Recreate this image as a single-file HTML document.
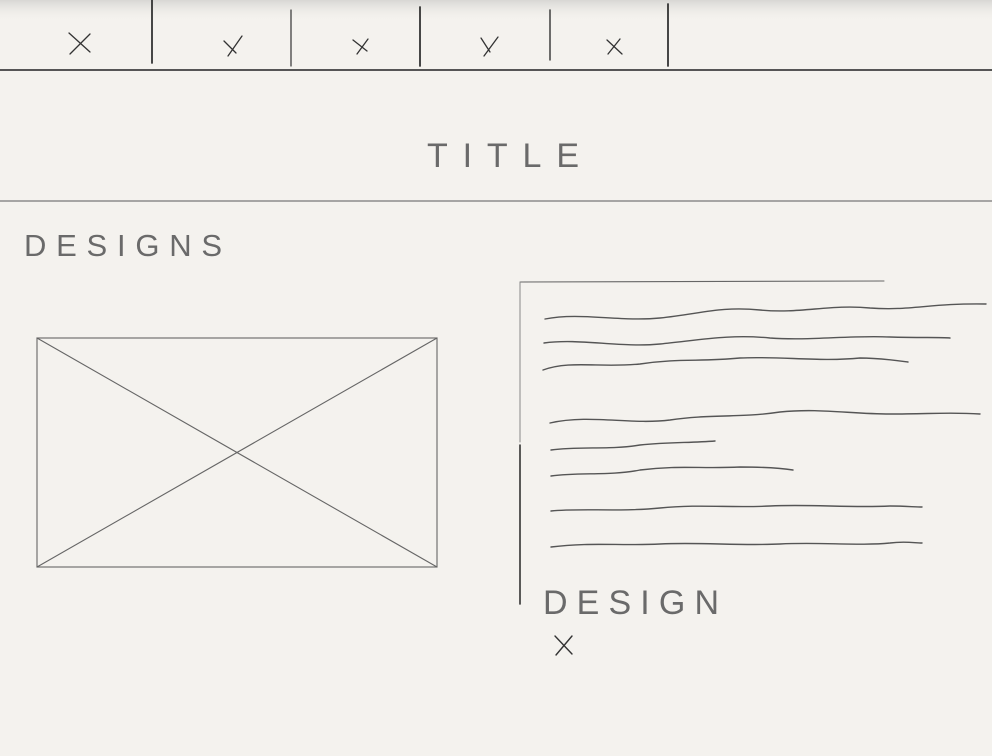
<!DOCTYPE html>
<html><head><meta charset="utf-8"><style>
html,body{margin:0;padding:0;background:#f4f2ee;}
svg{display:block}
text{font-family:"Liberation Sans",sans-serif;fill:#6a6a6a;font-weight:normal}
</style></head><body>
<svg width="992" height="756" viewBox="0 0 992 756" xmlns="http://www.w3.org/2000/svg">
<defs>
<linearGradient id="g" x1="0" y1="0" x2="0" y2="1">
<stop offset="0" stop-color="#d8d7d4"/><stop offset="1" stop-color="#f4f2ee" stop-opacity="0"/>
</linearGradient>
</defs>
<rect width="992" height="756" fill="#f4f2ee"/>
<rect width="992" height="22" fill="url(#g)"/>
<g stroke="#333" fill="none" stroke-linecap="round">
<line x1="152" y1="0" x2="152" y2="63" stroke-width="1.8"/>
<line x1="291" y1="10" x2="291" y2="66" stroke-width="1.2"/>
<line x1="420" y1="7" x2="420" y2="66" stroke-width="1.8"/>
<line x1="550" y1="10" x2="550" y2="60" stroke-width="1.4"/>
<line x1="668" y1="4" x2="668" y2="66" stroke-width="1.8"/>
<g stroke-width="1.3">
<path d="M69 33 L90 52 M90 34 L70 54"/>
<path d="M224 41 L236 53 M242 36 L228 56"/>
<path d="M353 40 L367 51 M368 39 L357 54"/>
<path d="M481 38 L490 52 M498 37 L484 56"/>
<path d="M607 40 L622 54 M620 39 L608 54"/>
</g>
<line x1="0" y1="70" x2="992" y2="70" stroke="#555" stroke-width="2"/>
<line x1="0" y1="201" x2="992" y2="201" stroke="#777" stroke-width="1.2"/>
<g stroke="#666" stroke-width="1.1">
<rect x="37" y="338" width="400" height="229"/>
<line x1="37" y1="338" x2="437" y2="567"/>
<line x1="437" y1="338" x2="37" y2="567"/>
</g>
<line x1="520" y1="282" x2="884" y2="281" stroke="#666" stroke-width="1.1"/>
<line x1="520" y1="282" x2="520" y2="442" stroke="#888" stroke-width="1"/>
<line x1="520" y1="445" x2="520" y2="604" stroke="#333" stroke-width="1.6"/>
<g stroke="#555" stroke-width="1.4">
<path d="M545 319 C580 312 620 322 660 318 C700 314 720 306 760 310 C800 314 830 304 870 308 C910 311 930 303 986 304"/>
<path d="M544 343 C580 338 620 348 660 344 C700 340 730 334 770 338 C810 341 850 335 890 337 C920 338 940 337 950 338"/>
<path d="M543 370 C570 360 600 368 640 364 C680 358 700 362 740 358 C780 356 820 362 860 358 C880 358 900 361 908 362"/>
<path d="M550 423 C590 414 630 425 670 420 C710 414 740 418 780 412 C820 408 850 414 890 414 C930 414 950 412 980 414"/>
<path d="M551 450 C580 446 610 450 640 445 C670 442 690 443 715 441"/>
<path d="M551 476 C580 472 610 476 640 470 C680 465 700 469 740 467 C760 467 780 468 793 470"/>
<path d="M551 511 C580 508 620 512 660 508 C700 504 730 508 770 506 C810 504 850 508 890 506 C905 506 915 507 922 507"/>
<path d="M551 547 C590 542 620 546 660 544 C700 542 740 546 780 544 C820 542 860 546 890 543 C905 541 915 543 922 543"/>
</g>
<path d="M555 636 L572 654 M572 636 L556 655" stroke-width="1.4"/>
</g>
<text x="427" y="167" font-size="34" textLength="152" lengthAdjust="spacing">TITLE</text>
<text x="24" y="256" font-size="31" textLength="198" lengthAdjust="spacing">DESIGNS</text>
<text x="543" y="614" font-size="34" textLength="176" lengthAdjust="spacing">DESIGN</text>
</svg>
</body></html>
